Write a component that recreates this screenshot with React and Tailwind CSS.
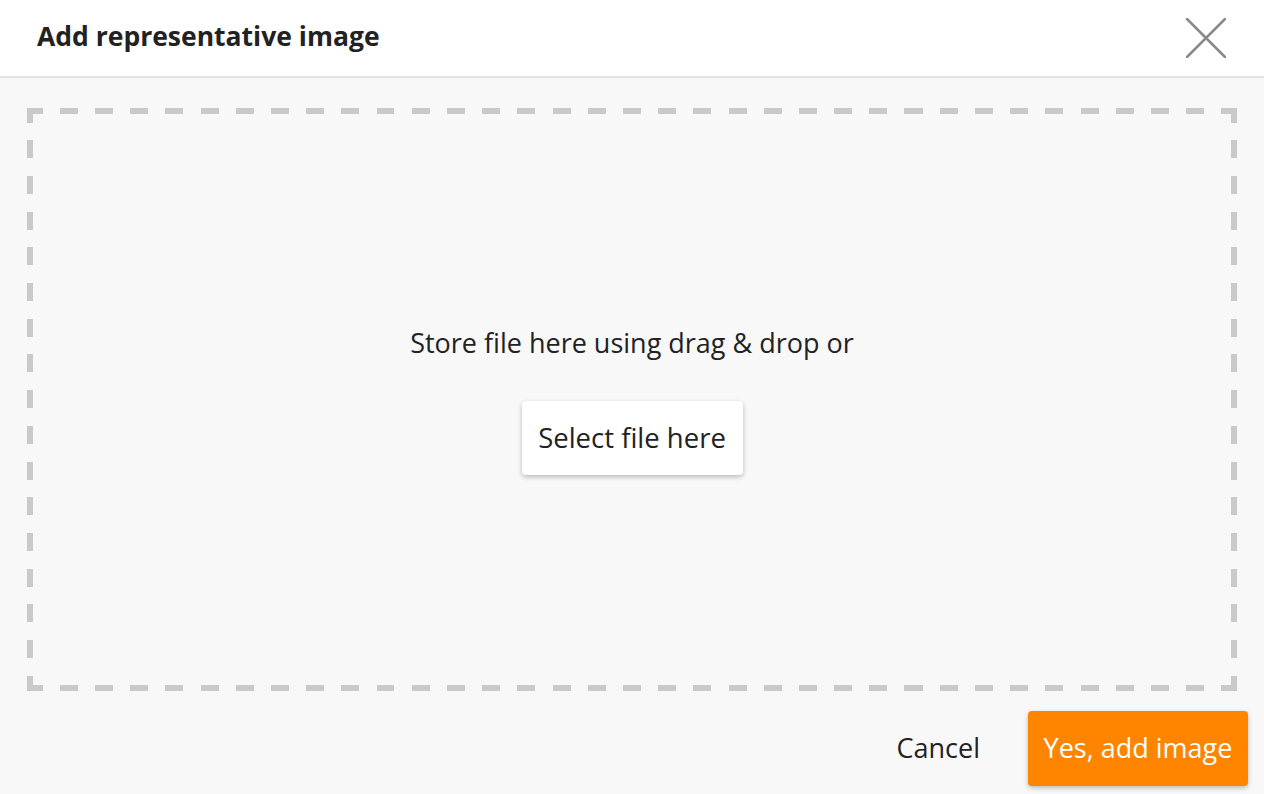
import React from "react";

const font = { fontFamily: "'Open Sans', 'Noto Sans', sans-serif" };

// dashed frame drawn with four repeating gradients so the dash rhythm matches
const dashedFrame =
  "bg-[image:repeating-linear-gradient(90deg,#c9c9c9_0_15.5px,transparent_15.5px_32.7px,#c9c9c9_32.7px_35.2px),repeating-linear-gradient(90deg,#c9c9c9_0_15.5px,transparent_15.5px_32.7px,#c9c9c9_32.7px_35.2px),repeating-linear-gradient(180deg,#c9c9c9_0_14.5px,transparent_14.5px_32.2px,#c9c9c9_32.2px_35.7px),repeating-linear-gradient(180deg,#c9c9c9_0_14.5px,transparent_14.5px_32.2px,#c9c9c9_32.2px_35.7px)] bg-[size:100%_6px,100%_6px,6px_100%,6px_100%] bg-[position:0_0,0_100%,0_0,100%_0] bg-no-repeat";

export default function App() {
  return (
    <div className="w-[1264px] h-[794px] flex flex-col bg-[#f8f8f8] text-[#222]" style={font}>
      {/* Header */}
      <div className="h-[78px] flex items-center justify-between bg-white border-b-2 border-[#e2e2e2] pl-[37px] pr-[38px]">
        <h1 className="text-[26.5px] font-bold text-[#222] pb-[2px]">
          Add representative image
        </h1>
        <button className="w-[40px] h-[40px] flex items-center justify-center">
          <svg width="40" height="40" viewBox="0 0 40 40" fill="none" stroke="#8a8a8a" strokeWidth="2.5" strokeLinecap="round">
            <path d="M1 1 L39 39 M39 1 L1 39" />
          </svg>
        </button>
      </div>

      {/* Drop zone */}
      <div className="px-[27px] pt-[30px]">
        <div className={`h-[583px] flex flex-col items-center justify-center gap-[42px] pt-[2px] ${dashedFrame}`}>
          <p className="text-[27px] leading-[32px]">Store file here using drag &amp; drop or</p>
          <button className="w-[221px] h-[74px] rounded-[4px] bg-white text-[27.5px] shadow-[0_2px_5px_rgba(0,0,0,0.25)]">
            Select file here
          </button>
        </div>
      </div>

      {/* Footer */}
      <div className="flex items-center justify-end gap-[48px] pr-[16px] pt-[20px]">
        <button className="text-[27px]">Cancel</button>
        <button className="w-[220px] h-[75px] rounded-[4px] bg-[#ff8400] text-white text-[27px] shadow-[0_2px_5px_rgba(0,0,0,0.25)]">
          Yes, add image
        </button>
      </div>
    </div>
  );
}
